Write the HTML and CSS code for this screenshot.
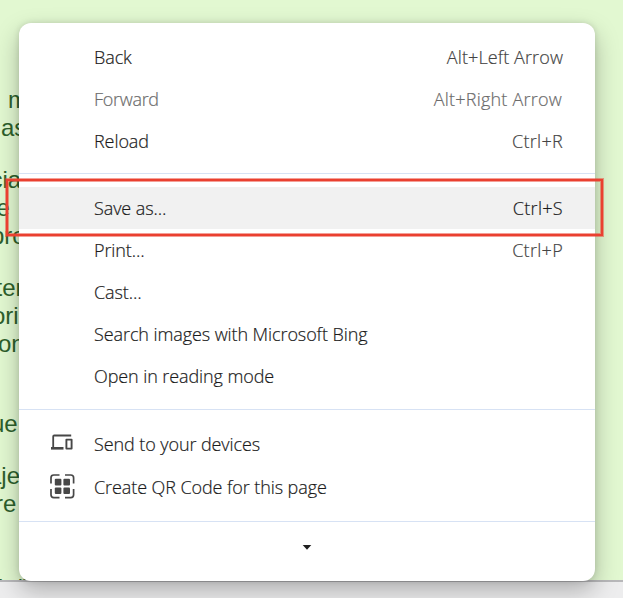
FILE: index.html
```html
<!DOCTYPE html>
<html lang="en">
<head>
<meta charset="utf-8">
<title>Context menu</title>
<link rel="stylesheet" href="styles.css">
</head>
<body>
<div class="window">
  <main class="page">
    <p><span class="l1">m</span><span class="l2">as</span></p>
    <p><span class="l3">cia</span><span class="l4">e</span><span class="l5">pro</span></p>
    <p><span class="l6">ter</span><span class="l7">ori</span><span class="l8">on</span></p>
    <p class="spaced"><span class="l9">ue</span></p>
    <p><span class="l10">aje</span><span class="l11">re</span></p>
    <p class="last"><span class="l12">r n</span></p>
  </main>
  <footer class="bottom-bar"></footer>
</div>
<nav class="menu">
  <div class="item"><span>Back</span><kbd>Alt+Left Arrow</kbd></div>
  <div class="item disabled"><span>Forward</span><kbd class="wide">Alt+Right Arrow</kbd></div>
  <div class="item"><span>Reload</span><kbd class="ctrl">Ctrl+R</kbd></div>
  <hr class="first">
  <div class="item active"><span>Save as…</span><kbd class="ctrl">Ctrl+S</kbd></div>
  <div class="item"><span>Print…</span><kbd class="ctrl">Ctrl+P</kbd></div>
  <div class="item"><span>Cast…</span></div>
  <div class="item"><span>Search images with Microsoft Bing</span></div>
  <div class="item"><span>Open in reading mode</span></div>
  <hr class="second">
  <div class="item tall">
    <svg class="icon" viewBox="0 0 26 26"><path d="M4.2 15.5V4.5q0-1 1-1H22.2" fill="none" stroke="#474747" stroke-width="1.8"/><path d="M2 15h12.5v2.6H2z" fill="#474747"/><path d="M17.4 7.6h5.2v9h-5.2z" fill="none" stroke="#474747" stroke-width="1.9" stroke-linejoin="round"/></svg>
    <span>Send to your devices</span>
  </div>
  <div class="item tall">
    <svg class="icon qr" viewBox="0 0 26 26"><g fill="#474747"><rect x="5.8" y="5.8" width="6.6" height="6.6" rx="1"/><rect x="14.4" y="5.8" width="6.6" height="6.6" rx="1"/><rect x="5.8" y="14.4" width="6.6" height="6.6" rx="1"/><rect x="14.4" y="14.4" width="6.6" height="6.6" rx="1"/></g><path d="M2 10.5V4.8Q2 2 4.8 2h5.7M16 2h5.8q2.8 0 2.8 2.8v5.7M24.6 16v5.8q0 2.8-2.8 2.8H16M10.5 24.6H4.8Q2 24.6 2 21.8V16" fill="none" stroke="#474747" stroke-width="1.7"/></svg>
    <span>Create QR Code for this page</span>
  </div>
  <hr class="third">
  <div class="more"><svg width="10" height="6" viewBox="0 0 10 6"><path d="M.7 0h8.6L5 4.8z" fill="#1f1f1f"/></svg></div>
</nav>
<div class="highlight"></div>
</body>
</html>
```

FILE: styles.css
```css
* { box-sizing: border-box; }
body { margin: 0; width: 623px; height: 598px; overflow: hidden; }
.window { height: 598px; display: flex; flex-direction: column; overflow: hidden; background: #e2f8d1; }
.page { height: 580px; padding-top: 86px; overflow: hidden; font: 24px/28px "Liberation Sans", Arial, sans-serif; color: #2d602c; }
.page p { margin: 0 0 24px; }
.page p.spaced { margin-top: 52px; }
.page p.last { margin-top: 52px; }
.page span { display: block; white-space: pre; }
.l1 { margin-left: 8px; }
.l2 { margin-left: 1px; }
.l3 { margin-left: -9.5px; }
.l4 { margin-left: -3.5px; }
.l5 { margin-left: -9px; }
.l6 { margin-left: -4.5px; }
.l7 { margin-left: -8px; }
.l8 { margin-left: -2px; }
.l9 { margin-left: -9px; }
.l10 { margin-left: -12px; }
.l11 { margin-left: -5px; }
.page .l12 { margin-left: -6px; word-spacing: 9px; }
.bottom-bar { height: 18px; border-top: 2px solid #b8b8ba; background: #ededee; }

.menu {
  position: absolute; left: 19px; top: 23px; width: 576px; height: 558px;
  padding-top: 13px; border-radius: 12px; background: #fff; overflow: hidden;
  box-shadow: 0 10px 24px rgba(0, 0, 0, .26), 0 0 6px rgba(0, 0, 0, .13);
  font: 300 18px/24px "Open Sans", "Noto Sans", sans-serif; color: #1b1b1b;
  letter-spacing: -.09px; -webkit-text-stroke: .2px currentColor;
}
.item { position: relative; display: flex; align-items: center; height: 42px; padding: 0 32px 0 75px; white-space: nowrap; }
.item.tall { height: 43px; }
.item.active { background: #f1f1f1; }
.item.disabled, .item.disabled kbd { color: #6b6b6b; }
.item.disabled > span { letter-spacing: -.3px; }
kbd { margin-left: auto; font: inherit; color: #444; letter-spacing: .1px; }
kbd.wide { letter-spacing: .22px; margin-right: 1px; }
kbd.ctrl { letter-spacing: .3px; }
.active kbd { color: #1b1b1b; }
.icon { position: absolute; left: 30px; top: 10px; width: 26px; height: 26px; }
.icon.qr { top: 8px; }
hr { height: 1px; margin: 0; border: 0; background: #d7e2f4; }
hr.first { margin: 11px 0 13px; }
hr.second { margin: 12px 0; }
hr.third { margin: 13px 0 23px; }
.more { display: flex; padding-left: 283px; }
.highlight { position: absolute; left: 6px; top: 179px; width: 597px; height: 57px; border: 2px solid #ea4030; box-shadow: 0 0 0 1px rgba(234, 64, 48, .5), inset 0 0 0 1px rgba(234, 64, 48, .5); }
```
